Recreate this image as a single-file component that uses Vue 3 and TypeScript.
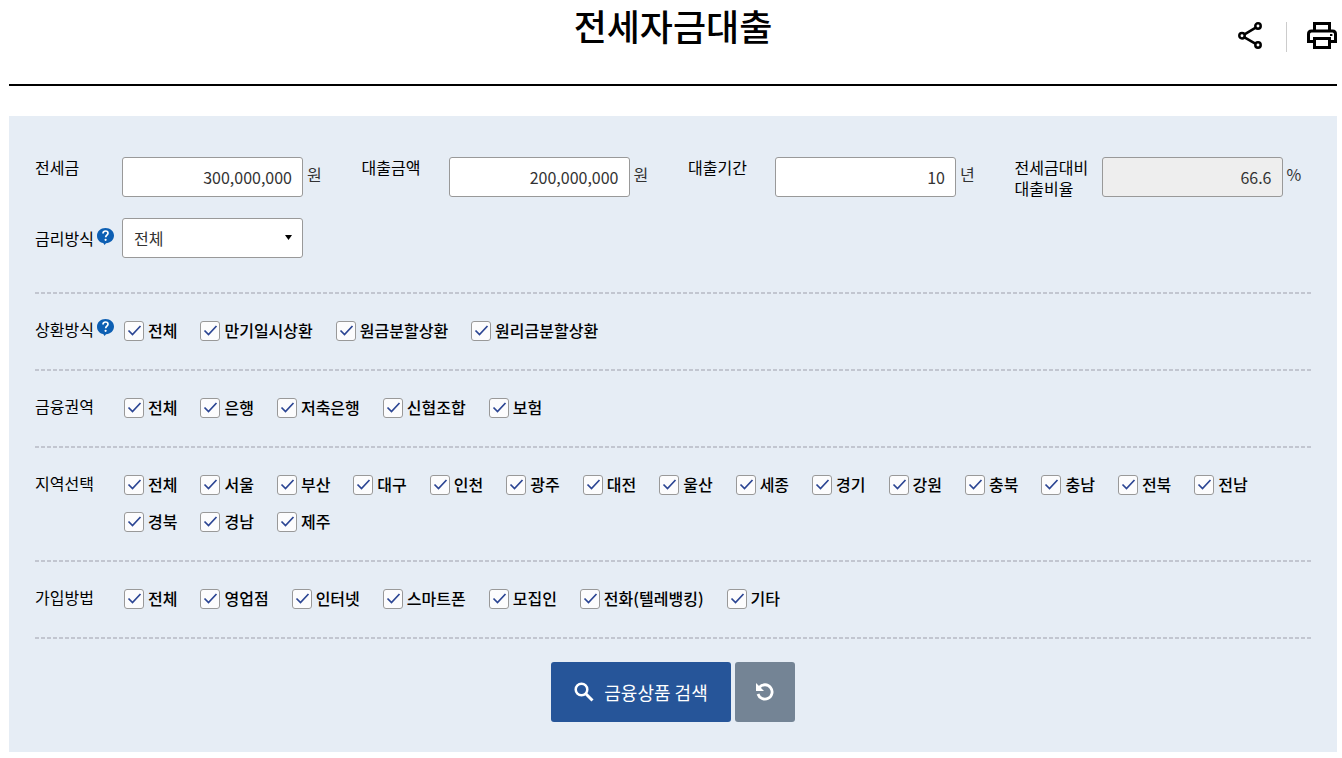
<script setup lang="ts">
import { computed, reactive, ref } from 'vue'

interface Field {
  id: string
  label: string
  value: string
  unit: string
}

interface Group {
  id: string
  label: string
  help?: boolean
  options: string[]
}

const fields = reactive<Field[]>([
  { id: 'deposit', label: '전세금', value: '300,000,000', unit: '원' },
  { id: 'amount', label: '대출금액', value: '200,000,000', unit: '원' },
  { id: 'period', label: '대출기간', value: '10', unit: '년' },
])

const toNumber = (text: string): number => Number(text.replace(/,/g, '')) || 0

const ratio = computed<string>(() => {
  const deposit = toNumber(fields[0].value)
  if (!deposit) return '0'
  return (Math.floor((toNumber(fields[1].value) / deposit) * 1000) / 10).toFixed(1)
})

const rateType = ref<string>('전체')

const groups: Group[] = [
  { id: 'repay', label: '상환방식', help: true, options: ['전체', '만기일시상환', '원금분할상환', '원리금분할상환'] },
  { id: 'sector', label: '금융권역', options: ['전체', '은행', '저축은행', '신협조합', '보험'] },
  {
    id: 'region',
    label: '지역선택',
    options: [
      '전체', '서울', '부산', '대구', '인천', '광주', '대전', '울산', '세종',
      '경기', '강원', '충북', '충남', '전북', '전남', '경북', '경남', '제주',
    ],
  },
  { id: 'join', label: '가입방법', options: ['전체', '영업점', '인터넷', '스마트폰', '모집인', '전화(텔레뱅킹)', '기타'] },
]

const checked = reactive<Record<string, boolean[]>>({})

function reset(): void {
  for (const group of groups) checked[group.id] = group.options.map(() => true)
  fields[0].value = '300,000,000'
  fields[1].value = '200,000,000'
  fields[2].value = '10'
  rateType.value = '전체'
}
reset()

function toggle(group: Group, index: number): void {
  const states = checked[group.id]
  if (index === 0) states.fill(states[0])
  else states[0] = states.slice(1).every(Boolean)
}
</script>

<template>
  <main class="page">
    <header class="header">
      <h1 class="title">전세자금대출</h1>
      <div class="tools">
        <button type="button" class="tool" aria-label="공유">
          <svg width="26" height="28" viewBox="0 0 26 28" fill="none" stroke="#000" stroke-width="2.5">
            <path d="M6.500 12.400 17.300 5.900M6.500 15.400l10.800 6.300" />
            <circle cx="4" cy="13.700" r="2.700" />
            <circle cx="20" cy="4" r="2.700" />
            <circle cx="20" cy="23" r="2.700" />
          </svg>
        </button>
        <span class="divider"></span>
        <button type="button" class="tool" aria-label="인쇄">
          <svg width="30" height="28" viewBox="0 0 30 28" fill="none" stroke="#000" stroke-width="3">
            <path d="M7.5 9V1.5h15V9" />
            <path d="M7.5 19.5h-6V12q0-3 3-3h21q3 0 3 3v7.5h-6" />
            <path d="M7.5 16.5h15v9h-15z" />
            <path d="M23 13h2.4" stroke-width="2" />
          </svg>
        </button>
      </div>
    </header>

    <form class="panel" @submit.prevent>
      <div class="fields">
        <div v-for="field in fields" :key="field.id" class="field">
          <label class="name" :for="field.id">{{ field.label }}</label>
          <input :id="field.id" v-model="field.value" class="box" type="text" />
          <span class="unit">{{ field.unit }}</span>
        </div>
        <div class="field">
          <label class="name" for="ratio">전세금대비<br />대출비율</label>
          <input id="ratio" class="box" type="text" :value="ratio" readonly />
          <span class="unit">%</span>
        </div>
        <div class="field middle">
          <div class="name">
            <label for="rate">금리방식</label>
            <button type="button" class="help" aria-label="금리방식 도움말">
              <svg width="17" height="17" viewBox="0 0 17 17">
                <path d="M8.500 0C13.400 0 17 3.200 17 7.600c0 4.300-3.500 7.600-8 7.700L7.600 17l-1.400-1.900C2.500 14.300 0 11.500 0 7.700 0 3.300 3.600 0 8.500 0z" fill="#0d5fb3" />
                <path d="M6 5.500C6 3.900 7.100 3 8.500 3s2.500.9 2.500 2.200c0 1.900-2.300 2-2.300 4" fill="none" stroke="#fff" stroke-width="1.700" />
                <circle cx="8.600" cy="11.800" r="1.100" fill="#fff" />
              </svg>
            </button>
          </div>
          <div class="select">
            <select id="rate" v-model="rateType" class="box">
              <option>전체</option>
              <option>분할상환방식</option>
              <option>만기일시상환방식</option>
            </select>
            <svg class="arrow" width="7" height="5" viewBox="0 0 7 5"><path d="M0 0h7L3.500 5z" /></svg>
          </div>
        </div>
      </div>

      <div v-for="group in groups" :key="group.id" class="row" role="group" :aria-labelledby="group.id">
        <div class="name">
          <span :id="group.id">{{ group.label }}</span>
          <button v-if="group.help" type="button" class="help" :aria-label="group.label + ' 도움말'">
            <svg width="17" height="17" viewBox="0 0 17 17">
              <path d="M8.500 0C13.400 0 17 3.200 17 7.600c0 4.300-3.500 7.600-8 7.700L7.600 17l-1.400-1.900C2.500 14.300 0 11.500 0 7.700 0 3.300 3.600 0 8.500 0z" fill="#0d5fb3" />
              <path d="M6 5.500C6 3.900 7.100 3 8.500 3s2.500.9 2.500 2.200c0 1.900-2.300 2-2.300 4" fill="none" stroke="#fff" stroke-width="1.700" />
              <circle cx="8.600" cy="11.800" r="1.100" fill="#fff" />
            </svg>
          </button>
        </div>
        <div class="options">
          <label v-for="(option, index) in group.options" :key="option" class="option">
            <input v-model="checked[group.id][index]" type="checkbox" @change="toggle(group, index)" />
            <svg class="tick" width="20" height="20" viewBox="0 0 20 20">
              <path d="M4.500 10.500 8.500 14.500 16.500 6" fill="none" stroke="#2b4593" stroke-width="1.700" />
            </svg>
            <span>{{ option }}</span>
          </label>
        </div>
      </div>

      <div class="actions">
        <button type="submit" class="search">
          <svg width="20" height="20" viewBox="0 0 20 20" fill="none" stroke="#fff">
            <circle cx="7.500" cy="7.500" r="5.800" stroke-width="2.500" />
            <path d="M11.800 11.800 18.500 18.500" stroke-width="3" />
          </svg>
          금융상품 검색
        </button>
        <button type="button" class="reset" aria-label="초기화" @click="reset">
          <svg width="20" height="20" viewBox="0 0 20 20">
            <path d="M4.500 5.200A7.200 7.200 0 1 1 3 12" fill="none" stroke="#fff" stroke-width="2.800" />
            <path d="M1 1v8h8z" fill="#fff" />
          </svg>
        </button>
      </div>
    </form>
  </main>
</template>

<style>
body {
  margin: 0;
  background: #fff;
}
</style>

<style scoped>
.page,
.page button,
.page input,
.page select {
  font-family: 'Noto Sans CJK KR', 'Noto Sans', sans-serif;
  font-size: 16px;
}
.page {
  padding: 0 5px 0 9px;
  color: #000;
}
.page * {
  box-sizing: border-box;
}
button {
  padding: 0;
  border: 0;
  background: none;
  cursor: pointer;
}
svg {
  display: block;
}
.header {
  display: grid;
  grid-template-columns: 1fr auto 1fr;
  height: 86px;
  border-bottom: 2px solid #000;
}
.title {
  grid-column: 2;
  margin: 0;
  font-size: 36px;
  font-weight: 500;
  line-height: 50px;
}
.tools {
  display: flex;
  justify-content: flex-end;
  align-items: flex-start;
  gap: 20px;
  padding-top: 22px;
}
.divider {
  width: 1px;
  height: 30px;
  margin-left: 2px;
  background: #ccc;
}
.panel {
  margin-top: 30px;
  padding: 41px 26px 30px;
  background: #e6edf5;
}
.fields {
  display: grid;
  grid-template-columns: repeat(4, 1fr);
  row-gap: 19px;
  margin-right: -30px;
  padding-bottom: 34px;
}
.field {
  display: flex;
  align-items: flex-start;
}
.field.middle {
  align-items: center;
}
.name {
  display: flex;
  flex: none;
  width: 87px;
  line-height: 21px;
  white-space: nowrap;
}
.help {
  flex: none;
  align-self: flex-start;
  width: 17px;
  height: 17px;
  margin-left: 3px;
}
.box {
  width: 181px;
  height: 40px;
  padding: 0 10px;
  border: 1px solid #999;
  border-radius: 3px;
  background: #fff;
  color: #333;
  text-align: right;
}
.box[readonly] {
  background: #eee;
}
.unit {
  margin-left: 4px;
  color: #333;
  line-height: 35px;
}
.select {
  position: relative;
}
.select .box {
  display: block;
  appearance: none;
  padding-left: 11px;
  text-align: left;
}
.arrow {
  position: absolute;
  top: 17px;
  right: 11px;
  pointer-events: none;
}
.row {
  display: flex;
  padding: 27px 0;
  background: repeating-linear-gradient(90deg, #c2c6d0 0 4px, transparent 4px 6px) top / 100% 2px no-repeat;
}
.options {
  display: flex;
  flex-wrap: wrap;
  gap: 14px 23px;
  padding-left: 2px;
}
.option {
  position: relative;
  display: flex;
  align-items: center;
  gap: 4px;
  height: 23px;
  font-weight: 500;
  line-height: 21px;
  white-space: nowrap;
}
.option input {
  appearance: none;
  width: 20px;
  height: 20px;
  margin: 0;
  border: 1px solid #999;
  border-radius: 3px;
  background: #fcfcfd;
}
.tick {
  position: absolute;
  top: 1px;
  left: 0;
  visibility: hidden;
  pointer-events: none;
}
.option input:checked + .tick {
  visibility: visible;
}
.actions {
  display: flex;
  justify-content: center;
  gap: 4px;
  padding-top: 25px;
  background: repeating-linear-gradient(90deg, #c2c6d0 0 4px, transparent 4px 6px) top / 100% 2px no-repeat;
}
.page .search {
  display: flex;
  align-items: center;
  justify-content: center;
  gap: 10px;
  width: 180px;
  height: 60px;
  border-radius: 3px;
  background: #265599;
  color: #fff;
  font-size: 18px;
}
.reset {
  display: flex;
  align-items: center;
  justify-content: center;
  width: 60px;
  height: 60px;
  border-radius: 3px;
  background: #748495;
}
</style>
